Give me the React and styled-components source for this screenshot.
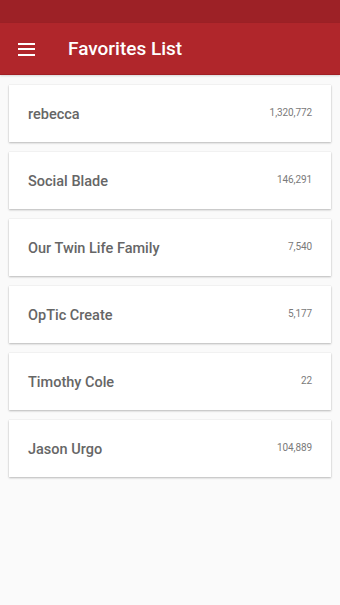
import styled, { createGlobalStyle } from "styled-components";

const GlobalStyle = createGlobalStyle`
  html, body {
    margin: 0;
    padding: 0;
    background: #fafafa;
    font-family: Roboto, "Noto Sans", sans-serif;
  }
`;

const Page = styled.div`
  min-height: 605px;
  background: #fafafa;
`;

const StatusBar = styled.div`
  height: 23px;
  background: #9d2126;
`;

const AppBar = styled.header`
  height: 51px;
  background: #b0262b;
  border-bottom: 1px solid #a11f24;
  display: flex;
  align-items: center;
  box-shadow: 0 1px 2px rgba(0, 0, 0, 0.15);
`;

const MenuButton = styled.button`
  width: 17px;
  height: 13px;
  margin-left: 18px;
  margin-top: 1px;
  padding: 0;
  border: 0;
  background: none;
  display: flex;
  flex-direction: column;
  justify-content: space-between;
`;

const MenuLine = styled.span`
  display: block;
  height: 2px;
  background: #fff;
`;

const Title = styled.h1`
  margin: 0 0 0 33px;
  font-size: 19px;
  font-weight: 500;
  color: #fff;
`;

const List = styled.ul`
  list-style: none;
  margin: 0;
  padding: 10px 9px;
  display: flex;
  flex-direction: column;
  gap: 10px;
`;

const Card = styled.li`
  height: 57px;
  background: #fff;
  box-shadow: 0 1px 2px rgba(0, 0, 0, 0.25), 0 0 1px rgba(0, 0, 0, 0.12);
  display: flex;
  align-items: center;
  justify-content: space-between;
  padding: 0 19px 0 19px;
`;

const Name = styled.span`
  font-size: 14.5px;
  font-weight: 500;
  color: #666;
  margin-top: 1px;
`;

const Count = styled.span`
  font-size: 10px;
  letter-spacing: -0.1px;
  color: #7a7a7a;
  margin-top: -2px;
`;

const favorites = [
  { name: "rebecca", count: "1,320,772" },
  { name: "Social Blade", count: "146,291" },
  { name: "Our Twin Life Family", count: "7,540" },
  { name: "OpTic Create", count: "5,177" },
  { name: "Timothy Cole", count: "22" },
  { name: "Jason Urgo", count: "104,889" },
];

export default function App() {
  return (
    <Page>
      <GlobalStyle />
      <StatusBar />
      <AppBar>
        <MenuButton aria-label="menu">
          <MenuLine />
          <MenuLine />
          <MenuLine />
        </MenuButton>
        <Title>Favorites List</Title>
      </AppBar>
      <List>
        {favorites.map((f) => (
          <Card key={f.name}>
            <Name>{f.name}</Name>
            <Count>{f.count}</Count>
          </Card>
        ))}
      </List>
    </Page>
  );
}
